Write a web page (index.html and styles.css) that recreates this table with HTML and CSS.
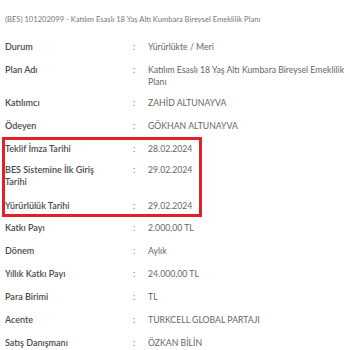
FILE: index.html
```html
<!DOCTYPE html>
<html lang="tr">
<head>
<meta charset="utf-8">
<link rel="stylesheet" href="styles.css">
</head>
<body>
<div class="page">
  <div class="title">(BES) 101202099 - Katılım Esaslı 18 Yaş Altı Kumbara Bireysel Emeklilik Planı</div>
  <div class="list">
    <div class="row"><div class="label">Durum</div><div class="colon">:</div><div class="value">Yürürlükte / Meri</div></div>
    <div class="row row-plan"><div class="label">Plan Adı</div><div class="colon">:</div><div class="value">Katılım Esaslı 18 Yaş Altı Kumbara Bireysel Emeklilik Planı</div></div>
    <div class="row"><div class="label">Katılımcı</div><div class="colon">:</div><div class="value">ZAHİD ALTUNAYVA</div></div>
    <div class="row row-before"><div class="label">Ödeyen</div><div class="colon">:</div><div class="value">GÖKHAN ALTUNAYVA</div></div>
    <div class="highlight">
      <div class="row row-h1"><div class="label">Teklif İmza Tarihi</div><div class="colon">:</div><div class="value">28.02.2024</div></div>
      <div class="row row-h2"><div class="label">BES Sistemine İlk Giriş Tarihi</div><div class="colon">:</div><div class="value">29.02.2024</div></div>
      <div class="row row-h3"><div class="label">Yürürlülük Tarihi</div><div class="colon">:</div><div class="value">29.02.2024</div></div>
    </div>
    <div class="row"><div class="label">Katkı Payı</div><div class="colon">:</div><div class="value">2.000,00 TL</div></div>
    <div class="row"><div class="label">Dönem</div><div class="colon">:</div><div class="value">Aylık</div></div>
    <div class="row"><div class="label">Yıllık Katkı Payı</div><div class="colon">:</div><div class="value">24.000,00 TL</div></div>
    <div class="row"><div class="label">Para Birimi</div><div class="colon">:</div><div class="value">TL</div></div>
    <div class="row"><div class="label">Acente</div><div class="colon">:</div><div class="value">TURKCELL GLOBAL PARTAJI</div></div>
    <div class="row"><div class="label">Satış Danışmanı</div><div class="colon">:</div><div class="value">ÖZKAN BİLİN</div></div>
  </div>
</div>
</body>
</html>
```

FILE: styles.css
```css
html, body {
  margin: 0;
  padding: 0;
  background: #ffffff;
}
body {
  font-family: "Lato", "Open Sans", sans-serif;
  color: #555;
}
.page {
  padding: 13px 2px 0 5px;
}
.title {
  font-size: 7.6px;
  line-height: 12px;
  color: #777;
  margin-bottom: 11px;
}
.list {
  display: flex;
  flex-direction: column;
}
.row {
  display: grid;
  grid-template-columns: 128px 15px 1fr;
  padding: 5px 0 6px;
  line-height: 12px;
  align-items: start;
}
.row-plan {
  padding-bottom: 4px;
}
.row-before {
  padding-bottom: 5px;
}
.label {
  font-size: 9px;
  font-weight: 600;
  color: #4a4a4a;
  padding-right: 16px;
}
.colon {
  font-size: 9px;
  color: #777;
}
.value {
  font-size: 8.7px;
  color: #666;
}
.highlight {
  margin-left: -3px;
  width: 194px;
  border: 3px solid #e2202c;
}
.row-h1 {
  padding: 3px 0 4px;
}
.row-h2 {
  padding: 5px 0 6px;
}
.row-h3 {
  padding: 6px 0 2px;
}
```
